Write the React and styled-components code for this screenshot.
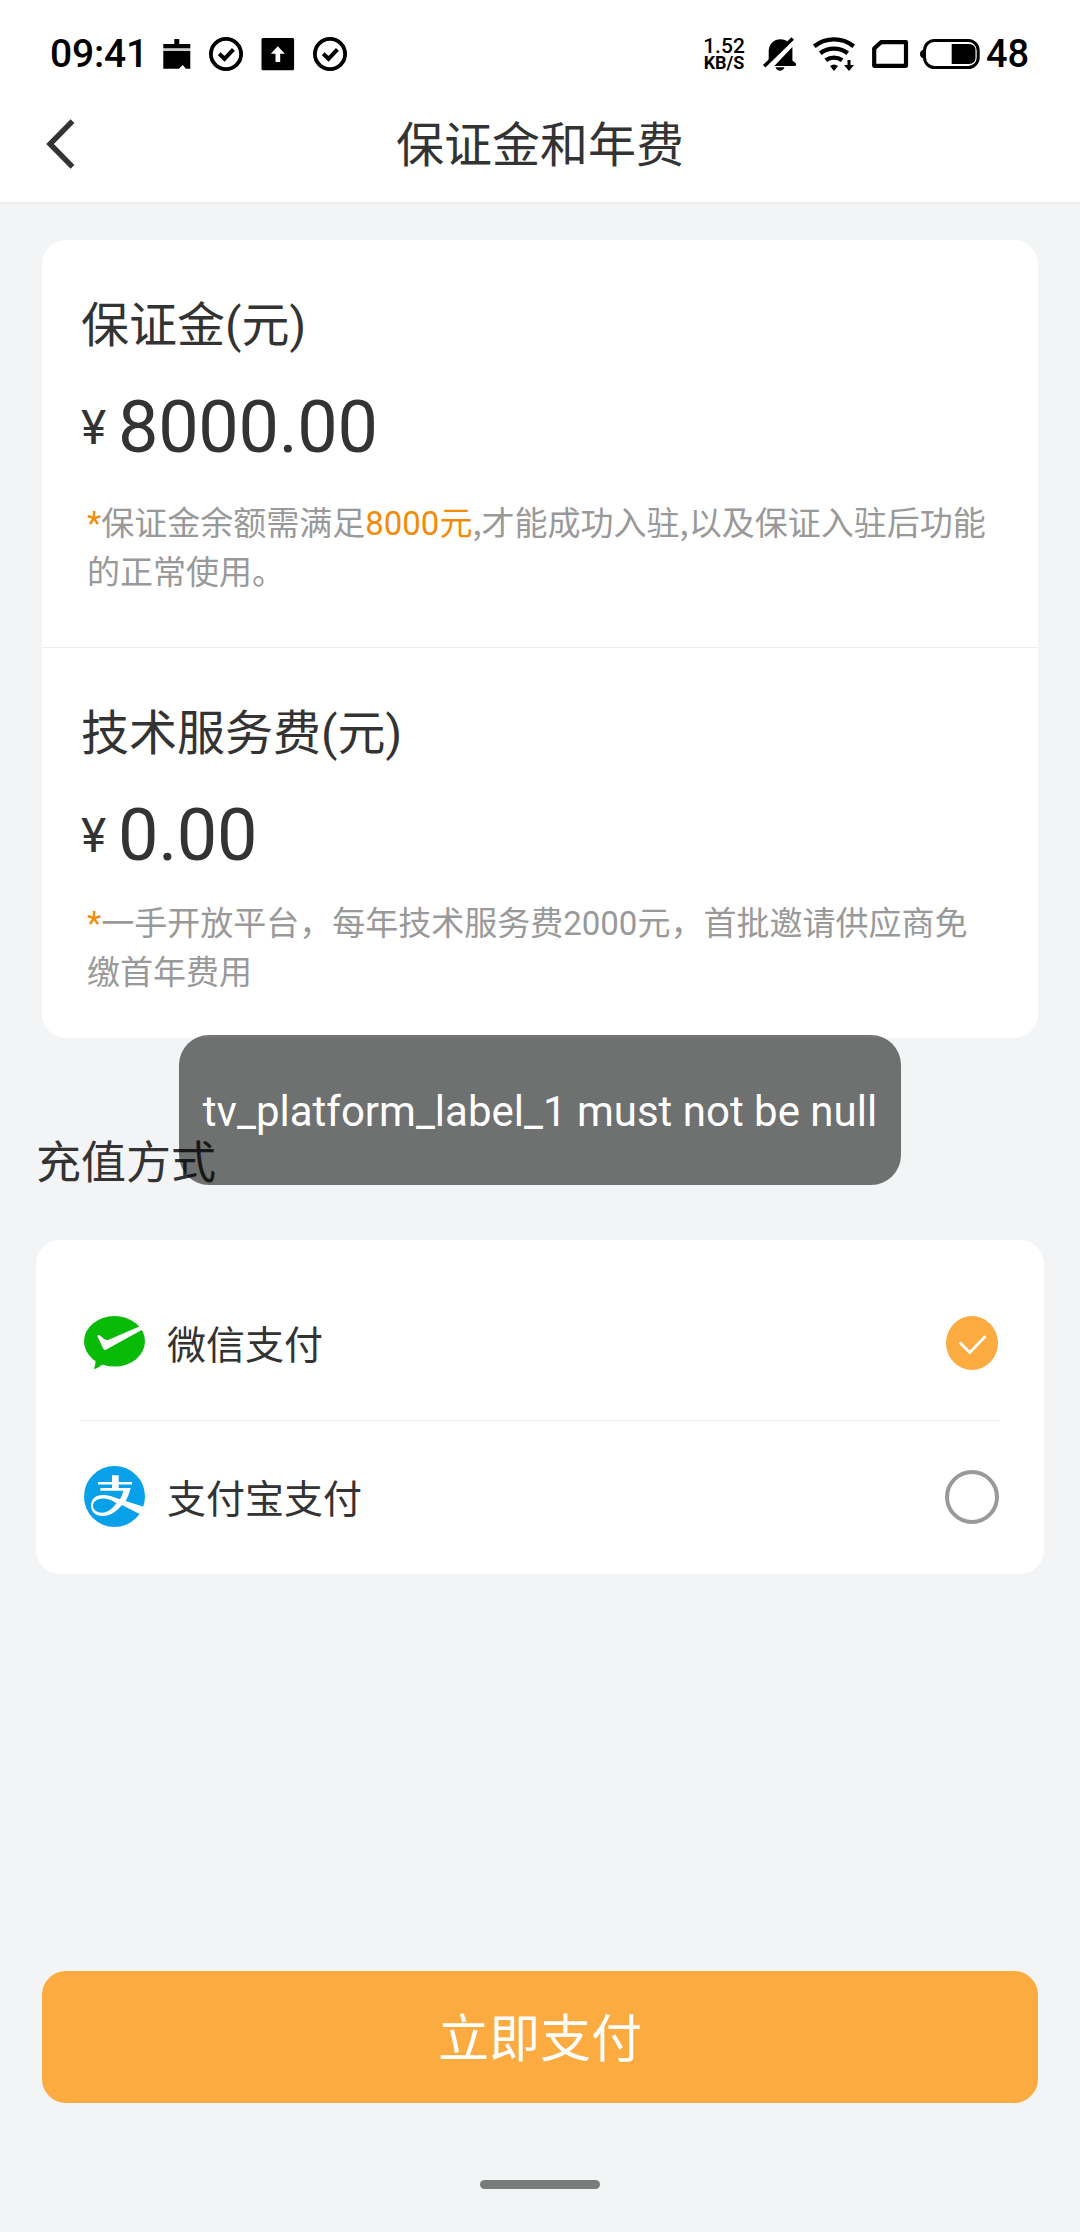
import React, { useState } from "react";
import styled, { createGlobalStyle } from "styled-components";

const fees = [
  {
    id: "deposit",
    title: "保证金(元)",
    amount: "8000.00",
    note: [
      { text: "*", accent: true },
      { text: "保证金余额需满足" },
      { text: "8000元", accent: true },
      { text: ",才能成功入驻,以及保证入驻后功能的正常使用。", cjk: true },
    ],
    noteGap: 29,
    bottom: 50,
  },
  {
    id: "service",
    title: "技术服务费(元)",
    amount: "0.00",
    note: [
      { text: "*", accent: true },
      { text: "一手开放平台，每年技术服务费2000元，首批邀请供应商免缴首年费用" },
    ],
    noteGap: 21,
    bottom: 41,
  },
];

const methods = [
  { id: "wechat", label: "微信支付", Icon: WechatPayIcon },
  { id: "alipay", label: "支付宝支付", Icon: AlipayIcon },
];

function BrushIcon() {
  return (
    <svg width="34" height="34" viewBox="0 0 34 34">
      <path d="M17.3 2h5v5h11v4.5h-27V7h11z" />
      <path d="M6.3 14h27v17.7h-4.5L25.8 28l-4 3.7H6.3z" />
      <path d="M6.3 11.5h27V14h-27z" fill="#ccc" />
    </svg>
  );
}

function CheckCircleIcon() {
  return (
    <svg width="34" height="34" viewBox="0 0 34 34" fill="none" stroke="#000">
      <circle cx="17" cy="17" r="15.1" strokeWidth="3.8" />
      <path d="M10.2 16.8l5.3 5L24.4 12.3" strokeWidth="4" />
    </svg>
  );
}

function UploadIcon() {
  return (
    <svg width="34" height="34" viewBox="0 0 34 34">
      <rect x="0.5" y="1" width="32.6" height="32.2" rx="1.5" />
      <path d="M16.800 9.300l7 7.400h-4.600v8.300h-4.700v-8.300H9.800z" fill="#fff" />
    </svg>
  );
}

function BellOffIcon() {
  return (
    <svg width="39" height="34" viewBox="0 0 39 34">
      <path d="M5.700 24V13.500C6 6.800 11 2.200 17.500 2.200c3.200 0 6 1 8 3.200z" />
      <path d="M1.200 29.200L29.700 1.400" stroke="#000" strokeWidth="3.500" />
      <path d="M11.300 29L29.400 10v13.500l3.600 3q.500 2.500-1.500 2.500z" />
      <path d="M12.500 30.300h9c-.8 2.300-2.300 3.400-4.500 3.400s-3.700-1.100-4.500-3.400z" />
    </svg>
  );
}

function WifiIcon() {
  return (
    <svg width="47" height="34" viewBox="0 0 47 34">
      <g fill="none" stroke="#000" strokeWidth="4.3">
        <path d="M1.3 9.3A31.5 31.5 0 0 1 40.7 9.3" />
        <path d="M7.3 16.3A22.5 22.5 0 0 1 34.7 16.3" />
        <path d="M12.8 23.2A14 14 0 0 1 29.2 23.2" />
      </g>
      <path d="M17 29q4-3 8 0l-4 5z" />
      <path d="M34.5 23h3v5H41l-5 6-5-6h3.5z" />
    </svg>
  );
}

function SimIcon() {
  return (
    <svg width="38" height="34" viewBox="0 0 38 34">
      <path
        d="M10 5.2H35V28.8H3.2V11.5z"
        fill="none"
        stroke="#000"
        strokeWidth="4.2"
        strokeLinejoin="round"
      />
    </svg>
  );
}

function BatteryIcon() {
  return (
    <svg width="60" height="34" viewBox="0 0 60 34">
      <rect
        x="4.5"
        y="3.5"
        width="53.7"
        height="27"
        rx="10"
        fill="none"
        stroke="#000"
        strokeWidth="3"
      />
      <path d="M4 12.5C1.5 13 0 14.5 0 17s1.5 4 4 4.5z" />
      <path d="M31.7 7H49q6.5 0 6.5 6.5v7q0 6.5-6.5 6.5H31.7z" />
    </svg>
  );
}

function BackIcon() {
  return (
    <svg width="30" height="50" viewBox="0 0 30 50">
      <path
        d="M26.5 2.2L4 25l22.5 22.8"
        fill="none"
        stroke="#333"
        strokeWidth="5.4"
      />
    </svg>
  );
}

function WechatPayIcon() {
  return (
    <svg width="61" height="53" viewBox="0 0 61 53">
      <ellipse cx="30.5" cy="25.3" rx="30.5" ry="25.3" fill="#09bb07" />
      <path d="M11.5 42q.8 5-1.5 11 2 0 8.500-4.500L22 45z" fill="#09bb07" />
      <path
        d="M13.5 20.5c-.3-1.500 1-2 2-1.300l5 4q1.800 1.300 4 .5L56 10.300l2.600 3.200L22.300 33.600c-1.300.8-2.300.5-3-.8z"
        fill="#fff"
      />
    </svg>
  );
}

function AlipayIcon() {
  return (
    <svg width="61" height="61" viewBox="0 0 61 61">
      <circle cx="30.5" cy="30.5" r="30.5" fill="#09a0ea" />
      <path
        d="M28 9.300h6.700V16H48v2.600H34.700V22H46.700q-1.700 7-5 13L61 41.200 56 48.300 38 39C32 46 26 50 19 50 11 50 7 45.500 7 39.700 7 33 12 29 18.500 29c6 0 11.500 2.200 17.500 4.200q2.300-4 3.500-8.500H16.300V22H28v-3.400H14V16h14z"
        fill="#fff"
      />
      <path
        d="M9 39.500c0-4 4.500-7 9.500-7 5.500 0 9.500 2 14 4.800C28 43 23.500 46.700 18 46.700c-5.500 0-9-3-9-7.200z"
        fill="#09a0ea"
      />
    </svg>
  );
}

function CheckedIcon() {
  return (
    <svg width="54" height="54" viewBox="0 0 54 54">
      <ellipse cx="27" cy="27" rx="26" ry="27" fill="#fcab40" />
      <path
        d="M15.5 27.3l9.3 9.2L39.7 21"
        fill="none"
        stroke="#fff"
        strokeWidth="2.8"
        strokeLinecap="round"
      />
    </svg>
  );
}

const App = () => {
  const [selected, setSelected] = useState("wechat");

  return (
    <>
      <GlobalStyle />
      <Page>
        <StatusBar>
          <StatusLeft>
            <Clock>09:41</Clock>
            <BrushIcon />
            <CheckCircleIcon />
            <UploadIcon />
            <CheckCircleIcon />
          </StatusLeft>
          <StatusRight>
            <NetSpeed>
              <SpeedValue>1.52</SpeedValue>
              <SpeedUnit>KB/S</SpeedUnit>
            </NetSpeed>
            <BellOffIcon />
            <WifiIcon />
            <SimIcon />
            <BatteryIcon />
            <BatteryLevel>48</BatteryLevel>
          </StatusRight>
        </StatusBar>

        <NavBar>
          <BackButton aria-label="back">
            <BackIcon />
          </BackButton>
          <NavTitle>保证金和年费</NavTitle>
        </NavBar>

        <FeeCard>
          {fees.map((fee) => (
            <FeeSection key={fee.id} $bottom={fee.bottom}>
              <FeeTitle>{fee.title}</FeeTitle>
              <FeeAmount>
                <Currency>¥</Currency>
                {fee.amount}
              </FeeAmount>
              <FeeNote $gap={fee.noteGap}>
                {fee.note.map((part, index) => (
                  <NotePart key={index} $accent={part.accent} $cjk={part.cjk}>
                    {part.text}
                  </NotePart>
                ))}
              </FeeNote>
            </FeeSection>
          ))}
        </FeeCard>

        <SectionTitle>充值方式</SectionTitle>

        <MethodCard>
          {methods.map(({ id, label, Icon }) => (
            <MethodRow key={id} onClick={() => setSelected(id)}>
              <Icon />
              <MethodLabel>{label}</MethodLabel>
              {selected === id ? <CheckedIcon /> : <EmptyRadio />}
            </MethodRow>
          ))}
        </MethodCard>

        <Footer>
          <PayButton>立即支付</PayButton>
          <HomeIndicator />
        </Footer>

        <Toast>tv_platform_label_1 must not be null</Toast>
      </Page>
    </>
  );
};

export default App;

const GlobalStyle = createGlobalStyle`
  * {
    box-sizing: border-box;
  }

  body {
    margin: 0;
    background: #f3f4f6;
    font-family: Roboto, "Noto Sans CJK SC", sans-serif;
    color: #333;
  }

  svg {
    display: block;
    flex-shrink: 0;
  }
`;

const Page = styled.div`
  position: relative;
  display: flex;
  flex-direction: column;
  width: 1080px;
  height: 2232px;
  overflow: hidden;
`;

const StatusBar = styled.div`
  display: flex;
  justify-content: space-between;
  align-items: center;
  height: 86px;
  padding: 22px 50px 0;
  background: #fff;
  color: #000;
`;

const StatusLeft = styled.div`
  display: flex;
  align-items: center;
  gap: 18px;
`;

const Clock = styled.span`
  width: 88.5px;
  white-space: nowrap;
  font-size: 39px;
  font-weight: 500;
  line-height: 46px;
  letter-spacing: -0.2px;
`;

const StatusRight = styled.div`
  display: flex;
  align-items: center;
  gap: 11px;
`;

const NetSpeed = styled.div`
  display: flex;
  flex-direction: column;
  align-items: center;
  width: 51px;
  padding: 1px 5px 0 0;
`;

const SpeedValue = styled.span`
  font-size: 21px;
  font-weight: 500;
  line-height: 17px;
`;

const SpeedUnit = styled.span`
  font-size: 18px;
  font-weight: 700;
  line-height: 16px;
`;

const BatteryLevel = styled.span`
  width: 44px;
  margin-left: -5px;
  font-size: 38px;
  font-weight: 500;
  line-height: 44px;
`;

const NavBar = styled.header`
  display: grid;
  grid-template-columns: 120px 1fr 120px;
  align-items: center;
  height: 118px;
  border-bottom: 2px solid #ebedee;
  background: #fff;
`;

const BackButton = styled.button`
  padding: 0 0 0 46px;
  border: 0;
  background: none;
`;

const NavTitle = styled.h1`
  margin: 0;
  padding-top: 3px;
  font-size: 48px;
  font-weight: 400;
  line-height: 64px;
  text-align: center;
`;

const FeeCard = styled.section`
  margin: 36px 42px 0;
  border-radius: 24px;
  background: #fff;
`;

const FeeSection = styled.div`
  padding: 54px 39px ${({ $bottom }) => $bottom}px;

  & + & {
    border-top: 1px solid #ededed;
  }
`;

const FeeTitle = styled.h2`
  margin: 0;
  font-size: 48px;
  font-weight: 400;
  line-height: 64px;
`;

const FeeAmount = styled.div`
  display: flex;
  align-items: center;
  margin-top: 28px;
  font-size: 72px;
  line-height: 84px;
  letter-spacing: -0.3px;
`;

const Currency = styled.span`
  width: 37px;
  font-size: 48px;
`;

const FeeNote = styled.p`
  margin: ${({ $gap }) => $gap}px 0 0;
  padding: 0 6px;
  font-size: 33px;
  line-height: 49px;
`;

const NotePart = styled.span`
  color: ${({ $accent }) => ($accent ? "#f08c0a" : "#999")};
  font-family: ${({ $cjk }) =>
    $cjk ? '"Noto Sans CJK SC", sans-serif' : "inherit"};
  line-height: 0;
`;

const SectionTitle = styled.h2`
  margin: 96px 36px 46px;
  font-size: 45px;
  font-weight: 400;
  line-height: 60px;
`;

const MethodCard = styled.section`
  margin: 0 36px;
  padding: 25px 45px 0;
  border-radius: 24px;
  background: #fff;
`;

const MethodRow = styled.div`
  display: flex;
  align-items: center;
  height: 155px;
  padding-left: 3px;

  & + & {
    height: 154px;
    padding-bottom: 2px;
    border-top: 1px solid #ededed;
  }
`;

const MethodLabel = styled.span`
  flex: 1;
  padding-top: 6px;
  margin-left: 22px;
  font-size: 39px;
  line-height: 52px;
`;

const EmptyRadio = styled.span`
  width: 54px;
  height: 54px;
  border: 4px solid #999;
  border-radius: 50%;
`;

const Footer = styled.footer`
  display: flex;
  flex-direction: column;
  align-items: center;
  margin-top: auto;
  padding: 0 42px 43px;
`;

const PayButton = styled.button`
  width: 100%;
  height: 132px;
  padding: 5px 0 0;
  border: 0;
  border-radius: 24px;
  background: #fcab40;
  color: #fff;
  font-family: inherit;
  font-size: 51px;
  line-height: 68px;
`;

const HomeIndicator = styled.div`
  width: 120px;
  height: 9px;
  margin-top: 77px;
  border-radius: 5px;
  background: #7a7c7b;
`;

const Toast = styled.div`
  position: absolute;
  top: 1035px;
  left: 179px;
  display: flex;
  align-items: center;
  justify-content: center;
  width: 722px;
  height: 150px;
  padding-top: 3px;
  border-radius: 30px;
  background: rgba(0, 2, 0, 0.545);
  color: #fff;
  font-size: 42px;
  line-height: 50px;
  white-space: nowrap;
`;
